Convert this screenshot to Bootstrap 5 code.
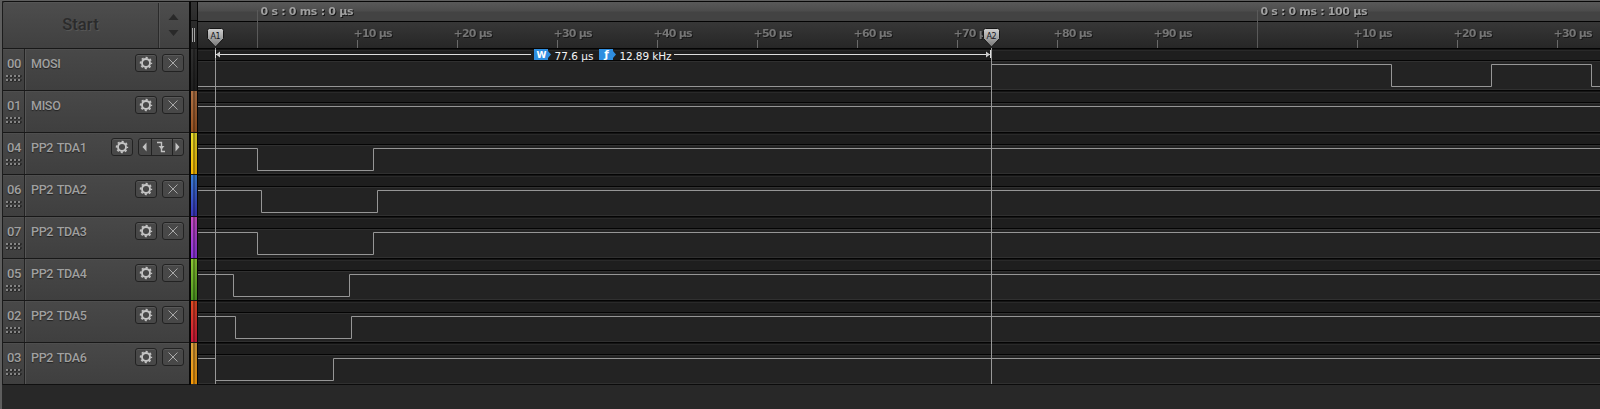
<!DOCTYPE html>
<html lang="en">
<head>
<meta charset="utf-8">
<title>Logic analyzer</title>
<link rel="stylesheet" href="https://cdn.jsdelivr.net/npm/bootstrap@5.3.0/dist/css/bootstrap.min.css">
<style>
*{box-sizing:border-box}
body{margin:0;background:#282828;font-family:Roboto,"Liberation Sans",sans-serif;height:409px;overflow:hidden}
.app{height:409px;border-left:2px solid #5e5e5e;border-top:1px solid #5e5e5e}
.side{width:187px;border-left:1px solid #1c1c1c;border-top:1px solid #101010;height:384px;background:#444;flex:none;border-bottom:1px solid #101010;border-top-left-radius:3px}
.start{height:46px;background:linear-gradient(#4d4d4d,#404040);border-top:1px solid #555;border-top-left-radius:2px}
.start-label{width:156px;font-weight:500;font-size:16.5px;letter-spacing:.1px;color:#2b2b2b;text-shadow:1px 1px 0 #565656;border-right:1px solid #2a2a2a}
.spin{width:28px;border-left:1px solid #555}
.chan{height:42px;border-top:1px solid #181818;background:linear-gradient(#555 0,#484848 1px,#3f3f3f 100%)}
.num{width:22px;border-right:1px solid #222;color:#a0a0a0;font-size:13px;font-weight:500;line-height:15px;padding:7px 0 0 4px;text-shadow:0 1px 1px #222;letter-spacing:-.5px}
.num svg{display:block;margin:4px 0 0 -1px}
.name{border-left:1px solid #555;color:#a0a0a0;font-size:12.5px;font-weight:500;letter-spacing:-.3px;word-spacing:1px;line-height:15px;padding:7px 5px 0 5px;text-shadow:0 1px 1px #222}
.tool{height:18px;border:1px solid #222;border-radius:3px;background:#484848;box-shadow:inset 0 1px 0 #585858;margin-top:-2px;overflow:hidden}
.tool svg{display:block}
.strip{width:9px;height:384px;border-left:2px solid #090909;border-right:1px solid #060606;background:#292929;flex:none}
.head{height:47px;border-top:1px solid #0b0b0b;background:linear-gradient(#343434,#202020)}
.tint{height:42px;border-top:1px solid #151515}
.canvas-area{width:1402px;height:385px;flex:none}
.engraved{filter:drop-shadow(1px 1px 0 #171717)}
svg text{white-space:pre}
</style>
<script src="https://cdn.jsdelivr.net/npm/bootstrap@5.3.0/dist/js/bootstrap.bundle.min.js"></script>
</head>
<body>
<main class="app d-flex align-items-start">
<aside class="side" id="side">
<div class="start d-flex">
<div class="start-label d-flex align-items-center justify-content-center">Start</div>
<div class="spin"><svg width="27" height="45"><path d="M8.500 17l5-6 5 6zM8.500 27h10l-5 6z" fill="#292929"/></svg></div>
</div>
</aside>
<div class="strip" id="strip"><div class="head"><svg class="d-block" width="6" height="46"><path d="M0 18.500h6" stroke="#0a0a0a"/><path d="M1.500 26v14M3.500 26v14" stroke="#a2a2a2"/></svg></div></div>
<svg class="canvas-area d-block" id="wave" width="1402" height="385" viewBox="198 1 1402 385"></svg>
</main>
<script>
const channels=[['00','MOSI','#303030','#202020'],['01','MISO','#b07346','#9a5321'],['04','PP2 TDA1','#e8dc2a','#f9b800'],['06','PP2 TDA2','#3a80d8','#3a35c0'],['07','PP2 TDA3','#c94bc4','#8a35e0'],['05','PP2 TDA4','#8cc832','#4f9a22'],['02','PP2 TDA5','#e04a22','#d2183a'],['03','PP2 TDA6','#dca03c','#f79a08']];
const gear='<svg width="20" height="16" viewBox="0 0 20 16"><g fill="none" stroke="#c4c4c4"><circle cx="10" cy="8" r="4" stroke-width="1.900"/><circle cx="10" cy="8" r="5.400" stroke-width="1.600" stroke-dasharray="2.120 2.120" stroke-dashoffset="1.060"/></g></svg>';
const close='<svg width="20" height="16"><path d="M5.500 3.500l9 9m0-9l-9 9" stroke="#a8a8a8" fill="none"/></svg>';
const trigger='<svg width="44" height="16"><path d="M7.500 3.500v9l-4-4.500zM36.500 3.500v9l4-4.500z" fill="#c2c2c2"/><path d="M12.500 0v16M33.500 0v16" stroke="#222"/><path d="M18 3.500h4.500v9H26" fill="none" stroke="#c2c2c2" stroke-width="1.400"/><path d="M19.500 7h6l-3 3.500z" fill="#c2c2c2"/></svg>';
let dots='';
for(let r=0;r<2;r++)for(let c=0;c<4;c++)dots+=`<path d="M${c*4} ${r*4+2}h3v-2" fill="none" stroke="#1d1d1d"/><rect x="${c*4}" y="${r*4}" width="2" height="2" fill="#858585"/>`;
channels.forEach((c,i)=>{
 const tools=i===2?`<div class="tool" style="width:22px">${gear}</div><div class="tool" style="width:46px">${trigger}</div>`:`<div class="tool" style="width:22px">${gear}</div><div class="tool" style="width:22px">${close}</div>`;
 side.insertAdjacentHTML('beforeend',`<div class="chan d-flex"><div class="num">${c[0]}<svg width="16" height="9">${dots}</svg></div><div class="name flex-grow-1 d-flex align-items-start"><span class="me-auto text-nowrap">${c[1]}</span><div class="d-flex" style="gap:5px">${tools}</div></div></div>`);
 strip.insertAdjacentHTML('beforeend',`<div class="tint" style="background:linear-gradient(90deg,#0000 0 2px,#0005 2px 4px,#0002 4px),linear-gradient(${c[2]},${c[3]})"></div>`);
});
let s=`<defs><linearGradient id="g1" x2="0" y2="1"><stop stop-color="#5a5a5a"/><stop offset=".5" stop-color="#4c4c4c"/><stop offset=".55" stop-color="#434343"/><stop offset="1" stop-color="#434343"/></linearGradient><linearGradient id="g2" x2="0" y2="1"><stop stop-color="#373737"/><stop offset="1" stop-color="#262626"/></linearGradient><linearGradient id="g3" x2="0" y2="1"><stop stop-color="#d0d0d0"/><stop offset="1" stop-color="#777"/></linearGradient></defs>
<rect x="198" y="1" width="1402" height="20" fill="url(#g1)"/><rect x="198" y="1" width="1402" height="1" fill="#080808"/><rect x="198" y="21" width="1402" height="1" fill="#030303"/><rect x="198" y="22" width="1402" height="26" fill="url(#g2)"/>`;
for(let i=0;i<8;i++){const y=48+42*i;s+=`<rect x="198" y="${y}" width="1402" height="42" fill="#232323"/><rect x="198" y="${y}" width="1402" height="1" fill="#040404"/><rect x="198" y="${y+1}" width="1402" height="11" fill="#1e1e1e"/><rect x="198" y="${y+1}" width="1402" height="1" fill="#141414"/><rect x="198" y="${y+2}" width="1402" height="1" fill="#292929"/><rect x="198" y="${y+12}" width="1402" height="1" fill="#040404"/><rect x="198" y="${y+13}" width="1402" height="1" fill="#303030"/><rect x="198" y="${y+41}" width="1402" height="1" fill="#303030"/>`;}
s+='<rect x="198" y="384" width="1402" height="1" fill="#0b0b0b"/>';
const label=(x,y,w,t,f)=>{s+=`<text class="engraved" font-family="DejaVu Sans" font-weight="700" font-size="11" x="${x}" y="${y}" textLength="${w}" fill="${f}">${t}</text>`};
for(let i=0;i<14;i++){const x=257+100*i;
 if(i%10===0)s+=`<path d="M${x+.5} 10V48" stroke="#5a5a5a"/>`;
 else{s+=`<path d="M${x+.5} 40v8" stroke="#6a6a6a"/>`;label(x-3.500,37,39,'+'+(i%10)*10+' µs','#757575');}}
label(260.500,15,93,'0 s : 0 ms : 0 µs','#a0a0a0');label(1260.500,15,107,'0 s : 0 ms : 100 µs','#a0a0a0');
const falls=[null,null,[257,373],[261,377],[257,373],[233,349],[235,351],[215,333]];
falls.forEach((f,i)=>{const h=64.500+42*i,l=h+22;
 const d=i===0?'M198 86.500H991.500V64.500H1391.500V86.500H1491.500V64.500H1591.500V86.500H1600':f?`M198 ${h}H${f[0]+.5}V${l}H${f[1]+.5}V${h}H1600`:`M198 ${h}H1600`;
 s+=`<path d="${d}" fill="none" stroke="#969696"/>`;});
s+=`<path d="M216 54.500H531M674 54.500H990" stroke="#ddd"/><path d="M216 54.500l4-3v6zM990 54.500l-4-3v6z" fill="#ccc"/><path d="M215.500 48V384M991.500 48V384" stroke="#989898"/><path d="M215.500 50v8M990.500 50v8" stroke="#e0e0e0"/>`;
[[534,'W'],[599,'ƒ']].forEach(a=>{s+=`<path d="M${a[0]} 49h14v2l3 3.500-3 3.500v2h-14z" fill="#2f8ee0"/><text x="${a[0]+7.500}" y="58" text-anchor="middle" font-family="DejaVu Sans" font-weight="700" font-size="${a[1]==='W'?9:10.500}" fill="#fff">${a[1]}</text>`;});
s+=`<g font-family="DejaVu Sans" font-size="10.500" fill="#f4f4f4"><text x="554.500" y="60" textLength="39">77.6 µs</text><text x="619.500" y="60" textLength="52">12.89 kHz</text></g>`;
[[215.5,'A1'],[991.5,'A2']].forEach(a=>{s+=`<path d="M${a[0]-8} 30.500q0-2 2-2h12q2 0 2 2v8l-8 8.500-8-8.500z" fill="url(#g3)" stroke="#151515"/><text x="${a[0]}" y="39" text-anchor="middle" font-family="DejaVu Sans" font-size="8" fill="#161620" textLength="10">${a[1]}</text>`;});
wave.innerHTML=s;
</script>
</body>
</html>
